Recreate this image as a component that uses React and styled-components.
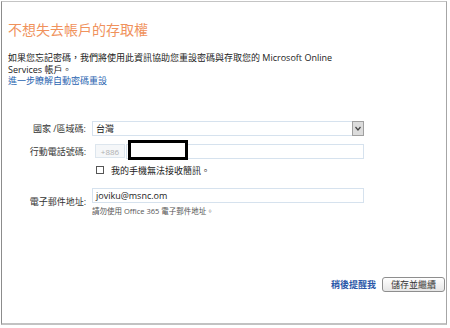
import React from "react";
import styled, { createGlobalStyle } from "styled-components";

const Global = createGlobalStyle`
  body {
    margin: 0;
    background: #fff;
    font-family: "Open Sans", "Noto Sans CJK TC", sans-serif;
  }
`;

const Frame = styled.div`
  box-sizing: border-box;
  width: 446px;
  height: 324px;
  margin: 1px 0 0 1px;
  border-top: 1px solid #c4c4c4;
  border-left: 1px solid #8c8c8c;
  border-right: 1px solid #a6a6a6;
  border-bottom: 2px solid #c2c2c2;
  display: flex;
  flex-direction: column;
`;

const Title = styled.h1`
  margin: 19px 0 0 6px;
  font-size: 14px;
  line-height: 18px;
  font-weight: normal;
  color: #f0925c;
`;

const Intro = styled.p`
  margin: 13px 0 0 6px;
  width: 345px;
  font-size: 9px;
  line-height: 11.5px;
  color: #222;
`;

const Link = styled.a`
  color: ${(p) => (p.$strong ? "#2a57a8" : "#2a64b0")};
  font-weight: ${(p) => (p.$strong ? "bold" : "normal")};
  text-decoration: none;
  font-size: 9px;
`;

const Form = styled.div`
  margin-top: 34px;
`;

const Row = styled.div`
  display: grid;
  grid-template-columns: 84px 272px;
  column-gap: 6px;
  align-items: center;
  margin-top: ${(p) => p.$top || 0}px;
`;

const Label = styled.div`
  text-align: right;
  font-size: 9px;
  line-height: 11px;
  color: #333;
`;

const Field = styled.div`
  box-sizing: border-box;
  height: 15px;
  border: 1px solid #d6e2ee;
  background: #fff;
  display: flex;
  align-items: center;
  padding-left: 3px;
  font-size: 9px;
  color: #222;
  width: ${(p) => p.$width || "100%"};
`;

const SelectArrow = styled.div`
  box-sizing: border-box;
  margin-left: auto;
  width: 12px;
  height: 15px;
  margin-right: -1px;
  border: 1px solid #a0a0a0;
  background: #dcdcdc;
  display: flex;
  align-items: center;
  justify-content: center;
`;

const PhoneGroup = styled.div`
  position: relative;
  display: flex;
  align-items: center;
  gap: 1px;
  padding-left: 3px;
`;

const Prefix = styled.div`
  box-sizing: border-box;
  width: 30px;
  height: 14px;
  border: 1px solid #dde6ee;
  background: #f5f7f9;
  color: #b0b0b0;
  font-size: 8px;
  display: flex;
  align-items: center;
  justify-content: center;
`;

const Redact = styled.div`
  position: absolute;
  left: 36px;
  top: -4px;
  width: 60px;
  height: 20px;
  box-sizing: border-box;
  border: 3px solid #000;
  background: #fff;
`;

const CheckLine = styled.label`
  display: flex;
  align-items: center;
  gap: 7px;
  padding-left: 4px;
  font-size: 9px;
  line-height: 11px;
  color: #222;
`;

const Box = styled.span`
  box-sizing: border-box;
  width: 8px;
  height: 8px;
  border: 1px solid #555;
  background: #fff;
`;

const Stack = styled.div`
  display: flex;
  flex-direction: column;
  gap: 3px;
`;

const Hint = styled.div`
  font-size: 7.5px;
  line-height: 10px;
  color: #555;
`;

const Footer = styled.div`
  margin-top: auto;
  margin-bottom: 31px;
  display: flex;
  justify-content: flex-end;
  align-items: center;
  gap: 6px;
  padding-right: 1px;
`;

const Button = styled.button`
  box-sizing: border-box;
  width: 63px;
  height: 15px;
  padding: 0;
  border: 1px solid #8e8e8e;
  border-radius: 3px;
  background: linear-gradient(#ffffff, #e6e6e6);
  font-family: inherit;
  font-size: 9px;
  line-height: 13px;
  color: #333;
`;

export default function App() {
  return (
    <>
      <Global />
      <Frame>
        <Title>不想失去帳戶的存取權</Title>
        <Intro>
          如果您忘記密碼，我們將使用此資訊協助您重設密碼與存取您的 Microsoft Online Services 帳戶。
          <br />
          <Link href="#">進一步瞭解自動密碼重設</Link>
        </Intro>
        <Form>
          <Row>
            <Label>國家 /區域碼:</Label>
            <Field>
              台灣
              <SelectArrow>
                <svg width="6" height="5" viewBox="0 0 6 5">
                  <path d="M0.5 1 L3 4 L5.5 1" fill="none" stroke="#444" strokeWidth="1.2" />
                </svg>
              </SelectArrow>
            </Field>
          </Row>
          <Row $top={8}>
            <Label>行動電話號碼:</Label>
            <PhoneGroup>
              <Prefix>+886</Prefix>
              <Field $width="238px" />
              <Redact />
            </PhoneGroup>
          </Row>
          <Row $top={6}>
            <span />
            <CheckLine>
              <Box />
              我的手機無法接收簡訊。
            </CheckLine>
          </Row>
          <Row $top={12}>
            <Label>電子郵件地址:</Label>
            <Stack>
              <Field>joviku@msnc.om</Field>
              <Hint>請勿使用 Office 365 電子郵件地址。</Hint>
            </Stack>
          </Row>
        </Form>
        <Footer>
          <Link href="#" $strong>稍後提醒我</Link>
          <Button>儲存並繼續</Button>
        </Footer>
      </Frame>
    </>
  );
}
